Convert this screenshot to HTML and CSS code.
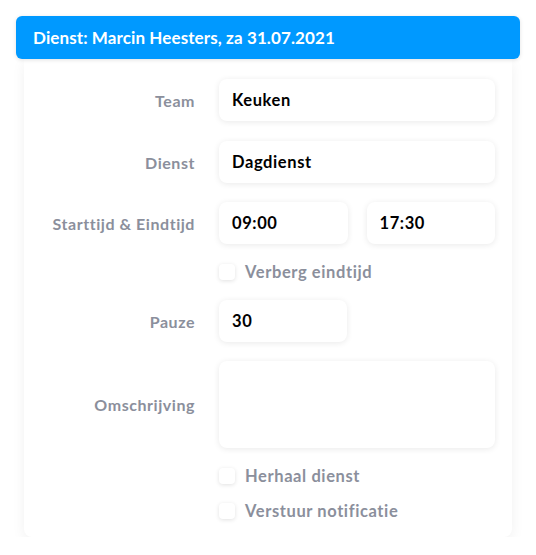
FILE: index.html
```html
<!DOCTYPE html>
<html lang="nl">
<head>
<meta charset="utf-8">
<link rel="stylesheet" href="styles.css">
</head>
<body>
<div class="dialog">
  <div class="header">Dienst: Marcin Heesters, za 31.07.2021</div>
  <div class="card">
    <div class="row r-team">
      <div class="label">Team</div>
      <div class="field"><div class="input">Keuken</div></div>
    </div>
    <div class="row r-dienst">
      <div class="label">Dienst</div>
      <div class="field"><div class="input">Dagdienst</div></div>
    </div>
    <div class="row r-times">
      <div class="label">Starttijd &amp; Eindtijd</div>
      <div class="field pair">
        <div class="input">09:00</div>
        <div class="input">17:30</div>
      </div>
    </div>
    <div class="row r-hide">
      <div class="label"></div>
      <div class="field check"><span class="box"></span><span class="check-label">Verberg eindtijd</span></div>
    </div>
    <div class="row r-pauze">
      <div class="label">Pauze</div>
      <div class="field"><div class="input short">30</div></div>
    </div>
    <div class="row r-omschr">
      <div class="label">Omschrijving</div>
      <div class="field"><div class="input area"></div></div>
    </div>
    <div class="row r-repeat">
      <div class="label"></div>
      <div class="field check"><span class="box"></span><span class="check-label">Herhaal dienst</span></div>
    </div>
    <div class="row r-notify">
      <div class="label"></div>
      <div class="field check"><span class="box"></span><span class="check-label">Verstuur notificatie</span></div>
    </div>
  </div>
</div>
</body>
</html>
```
FILE: styles.css
```css
* { box-sizing: border-box; }
html, body { margin: 0; padding: 0; background: #ffffff; }
body {
  font-family: Lato, "Open Sans", sans-serif;
  font-weight: 700;
  padding: 16px 16px 0 16px;
}
.dialog { width: 504px; }
.header {
  position: relative;
  z-index: 2;
  height: 43px;
  background: #0099ff;
  color: #ffffff;
  border-radius: 6px;
  font-size: 17px;
  letter-spacing: 0.1px;
  line-height: 43px;
  padding-left: 17px;
  box-shadow: 0 1px 4px rgba(0, 0, 0, 0.12);
}
.card {
  position: relative;
  margin: 0 8px;
  background: #ffffff;
  border-radius: 0 0 8px 8px;
  padding: 20px 17px 18px 0;
  box-shadow: 0 4px 14px rgba(0, 0, 0, 0.06);
}
.card::before {
  content: "";
  position: absolute;
  left: 0; right: 0; top: 0;
  height: 309px;
  box-shadow: 0 0 10px rgba(0, 0, 0, 0.05);
  z-index: -1;
}
.row {
  display: flex;
  align-items: center;
}
.r-team { margin-bottom: 20px; }
.r-dienst { margin-bottom: 19px; }
.r-times { margin-bottom: 20px; }
.r-hide { margin-bottom: 20px; }
.r-pauze { margin-bottom: 19px; }
.r-omschr { margin-bottom: 20px; }
.r-repeat { margin-bottom: 19px; }
.label {
  width: 171px;
  flex: none;
  text-align: right;
  color: #8b8f9c;
  font-size: 16px;
  letter-spacing: 0.55px;
}
.field {
  margin-left: 24px;
  flex: 1;
}
.pair { display: flex; gap: 19px; }
.pair .input { flex: 1; }
.input {
  height: 42px;
  background: #ffffff;
  border-radius: 8px;
  box-shadow: 0 1px 6px rgba(0, 0, 0, 0.09);
  color: #000000;
  font-size: 16.5px;
  letter-spacing: 0.6px;
  line-height: 42px;
  padding-left: 13px;
}
.input.short { width: 128px; }
.input.area { height: 87px; }
.check { display: flex; align-items: center; height: 16px; }
.box {
  width: 16px;
  height: 16px;
  border-radius: 4px;
  background: #ffffff;
  box-shadow: 0 1px 4px rgba(0, 0, 0, 0.12);
  flex: none;
}
.check-label {
  margin-left: 10px;
  color: #8b8f9c;
  font-size: 16.5px;
  letter-spacing: 0.6px;
}
```
